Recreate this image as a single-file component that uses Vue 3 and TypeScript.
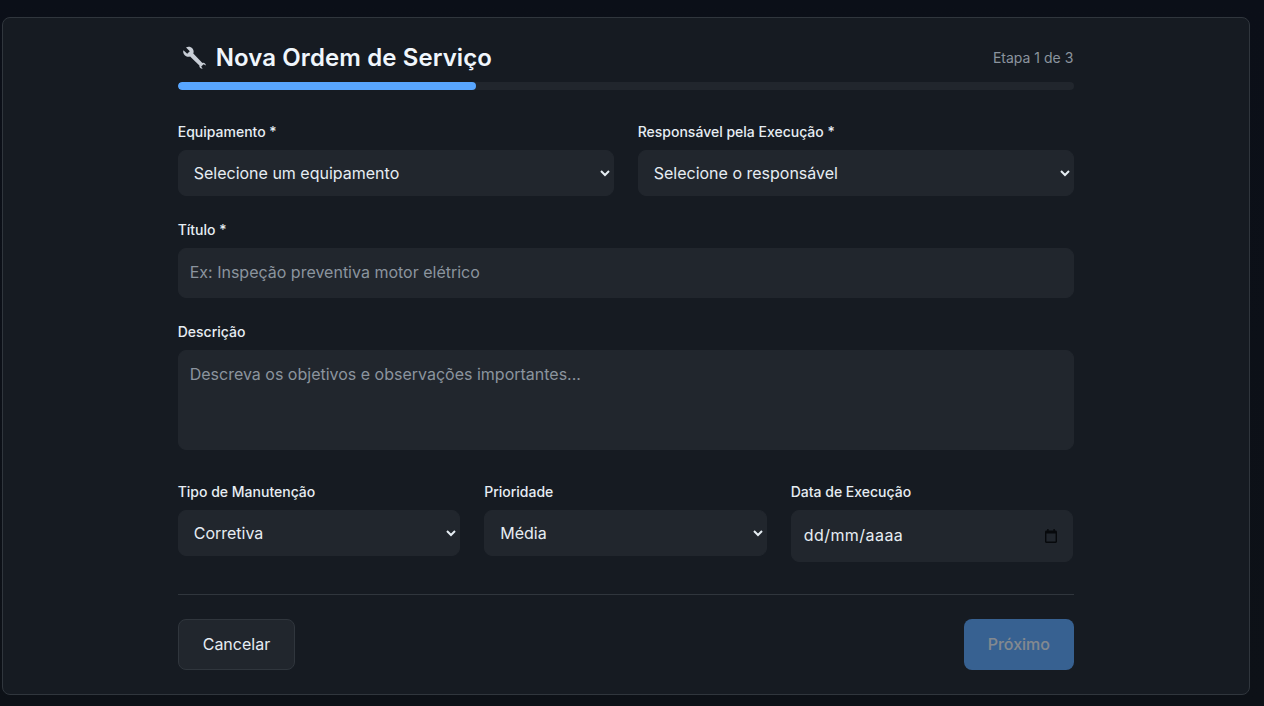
<script setup lang="ts">
const progress = 33.33
</script>

<template>
  <div class="page" lang="pt-BR">
    <div class="card">
      <form class="form" @submit.prevent>
        <header class="head">
          <h1 class="title">
            <svg class="wrench" viewBox="0 0 24 24" width="24" height="24" aria-hidden="true">
              <path fill="#c8ced6" d="M1.4 4.2 5.2 7.8 7.8 5.2 4 1.4C6.3 0.2 9 0.7 10.5 2.4 11.7 3.8 12 5.7 11.3 7.4L20.4 17C21.9 16.4 23.6 17.4 23.9 19.4L21.6 18.2 19.2 20.6 20.6 22.8C18.6 22.9 17 21.4 17.4 19.6L8.1 10.4C6.5 11.2 4.5 10.8 3 9.4 1.4 7.9 0.8 6 1.4 4.2Z" />
            </svg>
            Nova Ordem de Serviço
          </h1>
          <span class="step">Etapa 1 de 3</span>
        </header>
        <div class="track"><div class="fill" :style="{ width: progress + '%' }"></div></div>

        <div class="grid two">
          <label class="field">
            <span class="lab">Equipamento *</span>
            <select class="ctl"><option>Selecione um equipamento</option></select>
          </label>
          <label class="field">
            <span class="lab">Responsável pela Execução *</span>
            <select class="ctl"><option>Selecione o responsável</option></select>
          </label>
        </div>

        <label class="field block">
          <span class="lab">Título *</span>
          <input class="ctl text" type="text" placeholder="Ex: Inspeção preventiva motor elétrico" />
        </label>

        <label class="field block">
          <span class="lab">Descrição</span>
          <textarea class="ctl area" placeholder="Descreva os objetivos e observações importantes..."></textarea>
        </label>

        <div class="grid three">
          <label class="field">
            <span class="lab">Tipo de Manutenção</span>
            <select class="ctl"><option>Corretiva</option></select>
          </label>
          <label class="field">
            <span class="lab">Prioridade</span>
            <select class="ctl"><option>Média</option></select>
          </label>
          <label class="field">
            <span class="lab">Data de Execução</span>
            <span class="ctl date">
              <input class="date-input" type="text" placeholder="dd/mm/aaaa" />
              <svg class="cal" viewBox="0 0 12 14" width="12" height="14" aria-hidden="true">
                <path fill="#07090c" d="M2.2 0h1.4v1.4h4.8V0h1.4v1.4h.7c.8 0 1.5.7 1.5 1.5v9.6c0 .8-.7 1.5-1.5 1.5H1.5C.7 14 0 13.3 0 12.5V2.9c0-.8.7-1.5 1.5-1.5h.7V0Zm-.8 4.6v7.9c0 .1 0 .1.1.1h9c.1 0 .1 0 .1-.1V4.6H1.4Z" />
              </svg>
            </span>
          </label>
        </div>

        <footer class="foot">
          <button type="button" class="btn ghost">Cancelar</button>
          <button type="button" class="btn primary" disabled>Próximo</button>
        </footer>
      </form>
    </div>
  </div>
</template>

<style>
html, body { margin: 0; background: #0d1117; overflow: hidden; }
</style>

<style scoped>
.page {
  height: 706px;
  box-sizing: border-box;
  padding: 17px 14px 11px 2px;
  background: linear-gradient(180deg, #0b0f18 0%, #0d1117 100%);
  font-family: Inter, "Liberation Sans", sans-serif;
  color: #e6edf3;
}
.card {
  height: 100%;
  box-sizing: border-box;
  background: #161b22;
  border: 1px solid #30363d;
  border-radius: 8px;
  display: flex;
  justify-content: flex-start;
}
.form { width: 896px; margin-left: 174.7px; padding-top: 22px; }
.head { display: flex; justify-content: space-between; align-items: center; height: 36px; padding-right: 0.4px; }
.title { margin: 0; display: flex; align-items: center; gap: 10px; padding-left: 4px; font-size: 24px; line-height: 36px; font-weight: 600; letter-spacing: 0.1px; color: #f0f6fc; }
.wrench { display: block; flex: none; }
.step { font-size: 14px; line-height: 20px; color: #8b949e; }
.track { margin-top: 6px; height: 8px; border-radius: 4px; background: #21262d; overflow: hidden; }
.fill { height: 100%; border-radius: 4px; background: #58a6ff; }
.grid { display: grid; gap: 24px; }
.two { grid-template-columns: 1fr 1fr; margin-top: 32px; }
.three { grid-template-columns: repeat(3, 1fr); margin-top: 32px; margin-right: 0.5px; }
.field { display: flex; flex-direction: column; align-items: stretch; min-width: 0; }
.block { margin-top: 24px; }
.lab { display: block; font-size: 14px; line-height: 20px; font-weight: 500; color: #e6edf3; margin-bottom: 8px; }
.ctl {
  box-sizing: border-box;
  width: 100%;
  margin: 0;
  padding: 11px 11px 13px 11px;
  background: #21262d;
  border: 1px solid #21262d;
  border-radius: 8px;
  color: #e6edf3;
  font: 400 16px Inter, "Liberation Sans", sans-serif;
  outline: none;
}
select.ctl { height: 46px; padding-right: 10px; }
.text { height: 50px; }
.area { height: 100px; resize: none; display: block; padding-top: 13px; }
.date { height: 52px; display: flex; align-items: center; gap: 8px; padding-left: 12px; padding-right: 15px; }
.date-input {
  flex: 1;
  min-width: 0;
  padding: 0;
  border: 0;
  background: transparent;
  color: inherit;
  font: inherit;
  letter-spacing: 0.45px;
  outline: none;
}
.date-input::placeholder { color: #e6edf3; opacity: 1; }
.cal { display: block; flex: none; margin-top: 1px; }
.ctl::placeholder { color: #8b949e; opacity: 1; }
.three .field { align-self: start; }
.foot {
  margin-top: 32px;
  padding-top: 24px;
  border-top: 1px solid #30363d;
  display: flex;
  justify-content: space-between;
}
.btn {
  box-sizing: border-box;
  height: 51px;
  padding: 0 24px 2px;
  border-radius: 8px;
  font: 400 16px Inter, "Liberation Sans", sans-serif;
}
.ghost { background: #21262d; border: 1px solid #30363d; color: #e6edf3; }
.primary { background: #58a6ff; border: 0; color: #f0f6fc; font-weight: 500; opacity: 0.5; padding: 0 23.7px 2px; }
</style>
